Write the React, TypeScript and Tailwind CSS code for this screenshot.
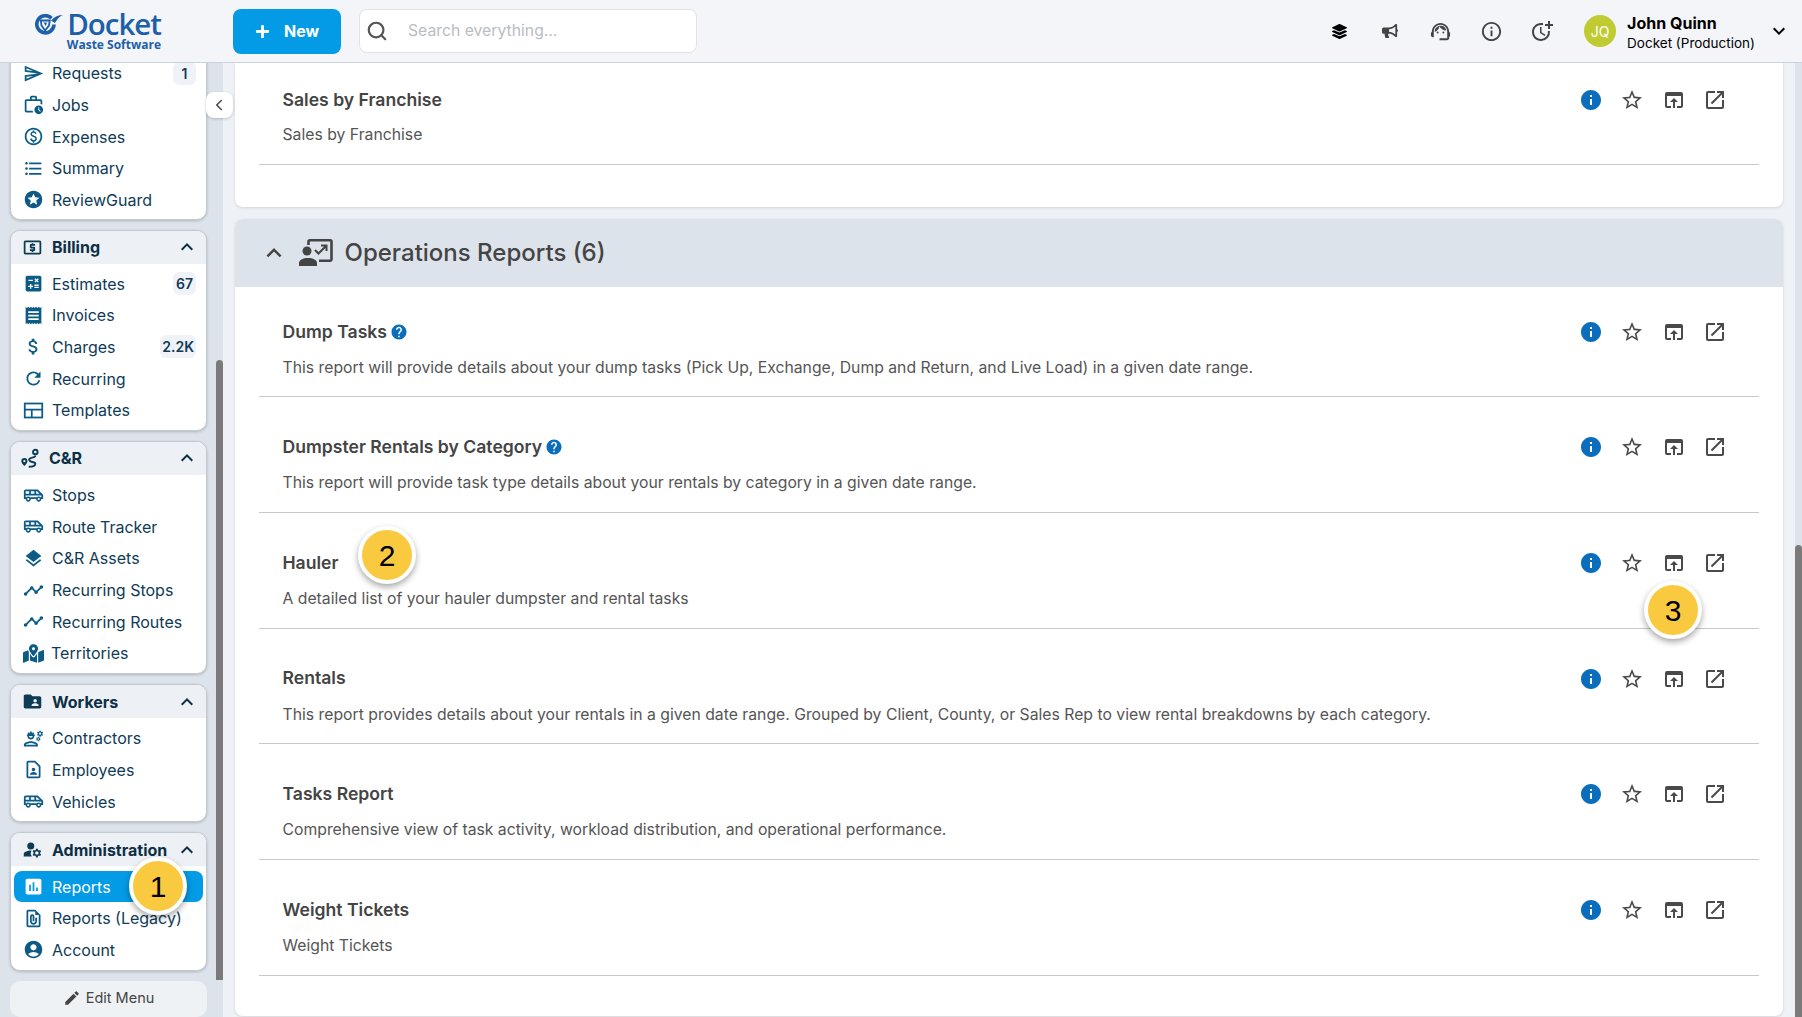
import type { ComponentType, ReactNode } from 'react'
import { ChevronLeft, Search } from 'lucide-react'
import { BiInfoCircle } from 'react-icons/bi'
import { FaBullhorn, FaLayerGroup, FaMapMarkedAlt, FaPlus } from 'react-icons/fa'
import {
  MdAccountCircle,
  MdAssessment,
  MdAttachMoney,
  MdCalculate,
  MdEdit,
  MdFolderShared,
  MdFormatListBulleted,
  MdHelp,
  MdInfo,
  MdKeyboardArrowDown,
  MdKeyboardArrowUp,
  MdLayers,
  MdManageAccounts,
  MdOpenInBrowser,
  MdOpenInNew,
  MdOutlineAirportShuttle,
  MdOutlineContactPage,
  MdOutlineEngineering,
  MdOutlineFilePresent,
  MdOutlineLocalAtm,
  MdOutlineMoreTime,
  MdOutlinePaid,
  MdOutlineSend,
  MdOutlineSupportAgent,
  MdOutlineWorkHistory,
  MdReceipt,
  MdRefresh,
  MdStarBorder,
  MdStars,
  MdTimeline,
} from 'react-icons/md'

type Icon = ComponentType<{ size?: number; className?: string }>

type NavItem = { label: string; icon: Icon; count?: string; active?: boolean; tight?: boolean }

function TemplatesIcon({ size = 22, className }: { size?: number; className?: string }) {
  return (
    <svg className={className} fill="none" height={size} stroke="currentColor" strokeWidth="2" viewBox="0 0 24 24" width={size}>
      <rect height="16" width="20" x="2" y="4" />
      <path d="M2 11h20M10 11v9" />
    </svg>
  )
}

function RouteIcon({ size = 22, className }: { size?: number; className?: string }) {
  return (
    <svg className={className} fill="none" height={size} stroke="currentColor" strokeWidth="2.200" viewBox="0 0 24 24" width={size}>
      <circle cx="17.500" cy="4.500" r="2.600" />
      <path d="M17.500 8.500c0 3.500-7 1.500-7 5s7 1.500 7 4.500-3.500 3.500-7.500 3.500" />
      <path d="M5 11.500a3.500 3.500 0 0 1 3.500 3.500c0 2-2 4-3.500 5.500C3.500 19 1.500 17 1.500 15A3.500 3.500 0 0 1 5 11.500z" fill="currentColor" stroke="none" />
      <circle cx="5" cy="15" fill="#edf0f4" r="1.200" stroke="none" />
    </svg>
  )
}

function NavRow({ item }: { item: NavItem }) {
  const Glyph = item.icon
  return (
    <div
      className={`flex h-[31.6px] items-center rounded-lg pr-[7px] text-[16px] ${
        item.active ? 'bg-[#039be5] text-white' : 'text-[#0f3b57]'
      }`}
    >
      <span className={`flex w-[38px] shrink-0 justify-center ${item.active ? 'text-white' : 'text-[#0b5b85]'}`}>
        <Glyph size={21} />
      </span>
      <span className={`truncate ${item.tight ? '-ml-[1px]' : ''}`}>{item.label}</span>
      {item.count && (
        <span className="ml-auto flex h-[23px] min-w-[23px] items-center justify-center rounded-md bg-[#eff3f7] px-[2px] text-[14px] font-semibold">
          {item.count}
        </span>
      )}
    </div>
  )
}

function NavCard({ title, icon: Glyph, items, narrow }: { title: string; icon: Icon; items: NavItem[]; narrow?: boolean }) {
  return (
    <section className="shrink-0 overflow-hidden rounded-[10px] border border-[#c3c9cf] bg-white shadow-[0_1px_3px_rgba(0,0,0,0.2)]">
      <div className="flex h-[33px] items-center bg-[#edf0f4] text-[#0d2f45]">
        <span className={`flex shrink-0 justify-center text-[#0d3a55] ${narrow ? 'w-[38px]' : 'w-[41px] pl-[1px]'}`}>
          <Glyph size={21} />
        </span>
        <span className="text-[16px] font-bold">{title}</span>
        <MdKeyboardArrowUp className="ml-auto mr-[7px]" size={24} />
      </div>
      <div className="px-[3px] pb-[4px] pt-[4.5px]">
        {items.map(item => (
          <NavRow item={item} key={item.label} />
        ))}
      </div>
    </section>
  )
}

function Sidebar() {
  return (
    <aside className="flex h-full w-[223px] shrink-0 overflow-hidden bg-[#dde3ea]">
      <div className="-mt-[400px] flex w-[216px] shrink-0 flex-col gap-[10px] pl-[10px] pr-[9px]">
        <section className="flex h-[556.5px] shrink-0 flex-col justify-end overflow-hidden rounded-[10px] border border-[#c3c9cf] bg-white px-[3px] pb-[3px] shadow-[0_1px_3px_rgba(0,0,0,0.2)]">
          {[
            { label: 'Requests', icon: MdOutlineSend, count: '1' },
            { label: 'Jobs', icon: MdOutlineWorkHistory },
            { label: 'Expenses', icon: MdOutlinePaid },
            { label: 'Summary', icon: MdFormatListBulleted },
            { label: 'ReviewGuard', icon: MdStars },
          ].map(item => (
            <NavRow item={item} key={item.label} />
          ))}
        </section>
        <NavCard
          icon={MdOutlineLocalAtm}
          items={[
            { label: 'Estimates', icon: MdCalculate, count: '67' },
            { label: 'Invoices', icon: MdReceipt },
            { label: 'Charges', icon: MdAttachMoney, count: '2.2K' },
            { label: 'Recurring', icon: MdRefresh },
            { label: 'Templates', icon: TemplatesIcon },
          ]}
          title="Billing"
        />
        <NavCard
          icon={RouteIcon}
          items={[
            { label: 'Stops', icon: MdOutlineAirportShuttle },
            { label: 'Route Tracker', icon: MdOutlineAirportShuttle },
            { label: 'C&R Assets', icon: MdLayers },
            { label: 'Recurring Stops', icon: MdTimeline },
            { label: 'Recurring Routes', icon: MdTimeline },
            { label: 'Territories', icon: FaMapMarkedAlt, tight: true },
          ]}
          narrow
          title="C&R"
        />
        <NavCard
          icon={MdFolderShared}
          items={[
            { label: 'Contractors', icon: MdOutlineEngineering },
            { label: 'Employees', icon: MdOutlineContactPage },
            { label: 'Vehicles', icon: MdOutlineAirportShuttle },
          ]}
          title="Workers"
        />
        <NavCard
          icon={MdManageAccounts}
          items={[
            { label: 'Reports', icon: MdAssessment, active: true },
            { label: 'Reports (Legacy)', icon: MdOutlineFilePresent },
            { label: 'Account', icon: MdAccountCircle },
          ]}
          title="Administration"
        />
        <button className="flex h-[36px] shrink-0 items-center justify-center gap-[5px] rounded-[10px] bg-[#eff2f5] pb-[2px] text-[14.5px] text-[#444]">
          <MdEdit size={18} />
          Edit Menu
        </button>
      </div>
      <div className="mt-[297px] h-[620px] w-[7px] shrink-0 rounded-t bg-[#7a7a7a]" />
    </aside>
  )
}

function LogoMark() {
  return (
    <svg className="mt-[3px] shrink-0" fill="none" height="21" viewBox="0 0 28 21" width="28">
      <path d="M16.500 4.200A8.600 8.600 0 1 0 19 10.500" stroke="#1d5fa8" strokeWidth="3.600" />
      <path d="M16 6.500C19.500 2.500 23.500 1 28 1c-3 1-5.500 3.500-8 8z" fill="#1d5fa8" />
      <path d="M5.800 6.500h9l-.8 5-4 5-3.500-5z" stroke="#1d5fa8" strokeWidth="1.800" />
      <path d="M8.500 8.500h3.500l-1.200 3.500z" fill="#1d5fa8" />
    </svg>
  )
}

function Header() {
  return (
    <header className="flex h-[63px] shrink-0 items-center border-b border-[#c9d3db] bg-[#f3f5f9]">
      <div className="flex w-[233px] shrink-0 items-start pl-[35px]">
        <LogoMark />
        <div className="-mt-[2px] ml-[6px] flex w-[92px] flex-col items-end font-['Open_Sans',sans-serif] text-[#1d5fa8]">
          <span className="h-[29px] text-[29.5px] font-semibold leading-[29px] tracking-[-1px]">Docket</span>
          <span className="h-[14px] whitespace-nowrap text-[12px] font-bold leading-[14px]">Waste Software</span>
        </div>
      </div>
      <button className="flex h-[45px] w-[108px] items-center justify-center gap-[14px] rounded-lg bg-[#039be5] text-[16px] font-bold text-white">
        <FaPlus size={15} />
        New
      </button>
      <div className="ml-[18px] flex h-[44px] w-[338px] items-center rounded-lg border border-[#dfe3e8] bg-white pl-[6px] text-[15.75px] text-[#b9bdc2]">
        <Search className="text-[#555]" size={22} strokeWidth={2.4} />
        <span className="ml-[20px]">Search everything...</span>
      </div>
      <div className="ml-auto flex items-center text-[#444]">
        <span className="flex w-[50.5px] justify-center text-black">
          <FaLayerGroup size={15} />
        </span>
        <span className="flex w-[50.5px] justify-center">
          <FaBullhorn size={16} />
        </span>
        <span className="flex w-[50.5px] justify-center">
          <MdOutlineSupportAgent size={23} />
        </span>
        <span className="flex w-[50.5px] justify-center">
          <BiInfoCircle size={23} />
        </span>
        <span className="flex w-[50.5px] justify-center">
          <MdOutlineMoreTime size={24} />
        </span>
        <span className="ml-[17px] flex size-[32px] items-center justify-center rounded-full bg-[#bfcb30] text-[14px] text-white">JQ</span>
        <div className="ml-[11px] mt-[4px] flex flex-col text-black">
          <span className="text-[16px] font-bold leading-[20px]">John Quinn</span>
          <span className="text-[13.5px] leading-[20px]">Docket (Production)</span>
        </div>
        <MdKeyboardArrowDown className="ml-[12px] mr-[11px] text-black" size={24} />
      </div>
    </header>
  )
}

function RowActions() {
  return (
    <div className="flex items-center text-[#4a4a4a]">
      <span className="flex w-[41.5px] justify-center text-[#0a6ebd]">
        <MdInfo size={24} />
      </span>
      <span className="flex w-[41.5px] justify-center">
        <MdStarBorder size={24} />
      </span>
      <span className="flex w-[41.5px] justify-center">
        <MdOpenInBrowser size={24} />
      </span>
      <span className="flex w-[41.5px] justify-center">
        <MdOpenInNew size={24} />
      </span>
    </div>
  )
}

function ReportRow({
  title,
  description,
  help,
  spacing = 'h-[115.8px] pt-[36px]',
}: {
  title: string
  description: string
  help?: boolean
  spacing?: string
}) {
  return (
    <div className={`mx-[24px] flex flex-col border-b border-[#c8c8c8] pl-[23.5px] pr-[23px] ${spacing}`}>
      <div className="flex h-[28px] items-center justify-between">
        <div className="flex items-center gap-[3px]">
          <span className="text-[17.6px] font-semibold text-[#444]">{title}</span>
          {help && <MdHelp className="text-[#0a6ebd]" size={18} />}
        </div>
        <RowActions />
      </div>
      <p className="mt-[10px] text-[15.75px] leading-[24px] text-[#555]">{description}</p>
    </div>
  )
}

function OperationsIcon() {
  return (
    <svg fill="#444" height="27" viewBox="0 0 34 27" width="34">
      <circle cx="8" cy="12" r="4.500" />
      <path d="M0 27v-3c0-3 4-5 9-5s9 2 9 5v3z" />
      <path
        d="M9.500 6V2.500a1.200 1.200 0 0 1 1.200-1.200h20.600a1.200 1.200 0 0 1 1.200 1.200v18a1.200 1.200 0 0 1-1.200 1.200H20"
        fill="none"
        stroke="#444"
        strokeWidth="2.600"
      />
      <path d="M16 11l3.500 3.500L27 7M22 6.500h5.500V12" fill="none" stroke="#444" strokeWidth="2" />
    </svg>
  )
}

function Marker({ n, className }: { n: string; className: string }) {
  return (
    <div
      className={`absolute flex size-[58px] items-center justify-center rounded-full border-[4px] border-white bg-[#f9c940] font-['Liberation_Sans',sans-serif] text-[30px] text-black shadow-[0_3px_6px_rgba(0,0,0,0.35)] ${className}`}
    >
      {n}
    </div>
  )
}

function Overlay({ children }: { children: ReactNode }) {
  return <div className="pointer-events-none absolute inset-0">{children}</div>
}

export default function App() {
  return (
    <div className="relative flex h-[1017px] w-[1802px] flex-col overflow-hidden bg-[#eef2f6] font-['Inter',sans-serif]">
      <Header />
      <div className="flex min-h-0 flex-1">
        <Sidebar />
        <main className="flex min-w-0 flex-1 flex-col gap-[12px] overflow-hidden px-[12px]">
          <section className="shrink-0 rounded-b-lg bg-white pb-[42px] shadow-[0_1px_3px_rgba(0,0,0,0.12)]">
            <ReportRow description="Sales by Franchise" spacing="h-[102px] pt-[23px] [&>p]:mt-[9px]" title="Sales by Franchise" />
          </section>
          <section className="shrink-0 overflow-hidden rounded-lg bg-white pb-[40px] shadow-[0_1px_3px_rgba(0,0,0,0.12)]">
            <div className="flex h-[68px] items-center bg-[#dde3ea] text-[#444]">
              <MdKeyboardArrowUp className="ml-[24px]" size={30} />
              <span className="mb-[2px] ml-[10px]">
                <OperationsIcon />
              </span>
              <span className="ml-[11.5px] text-[24px] font-medium">Operations Reports (6)</span>
            </div>
            <ReportRow
              description="This report will provide details about your dump tasks (Pick Up, Exchange, Dump and Return, and Live Load) in a given date range."
              help
              spacing="h-[110px] pt-[31px]"
              title="Dump Tasks"
            />
            <ReportRow
              description="This report will provide task type details about your rentals by category in a given date range."
              help
              title="Dumpster Rentals by Category"
            />
            <ReportRow description="A detailed list of your hauler dumpster and rental tasks" title="Hauler" />
            <ReportRow
              description="This report provides details about your rentals in a given date range. Grouped by Client, County, or Sales Rep to view rental breakdowns by each category."
              title="Rentals"
            />
            <ReportRow
              description="Comprehensive view of task activity, workload distribution, and operational performance."
              title="Tasks Report"
            />
            <ReportRow description="Weight Tickets" title="Weight Tickets" />
          </section>
        </main>
        <div className="w-[7px] shrink-0 bg-[#dde3ea]">
          <div className="mt-[482px] h-[480px] rounded-t bg-[#7a7a7a]" />
        </div>
      </div>
      <Overlay>
        <div className="absolute left-[206px] top-[92px] flex h-[26px] w-[27px] items-center justify-center rounded-lg bg-white pr-[2px] text-[#444] shadow-[0_1px_3px_rgba(0,0,0,0.2)]">
          <ChevronLeft size={18} />
        </div>
        <Marker className="left-[129px] top-[857px]" n="1" />
        <Marker className="left-[358px] top-[526px]" n="2" />
        <Marker className="left-[1644px] top-[581px]" n="3" />
      </Overlay>
    </div>
  )
}
